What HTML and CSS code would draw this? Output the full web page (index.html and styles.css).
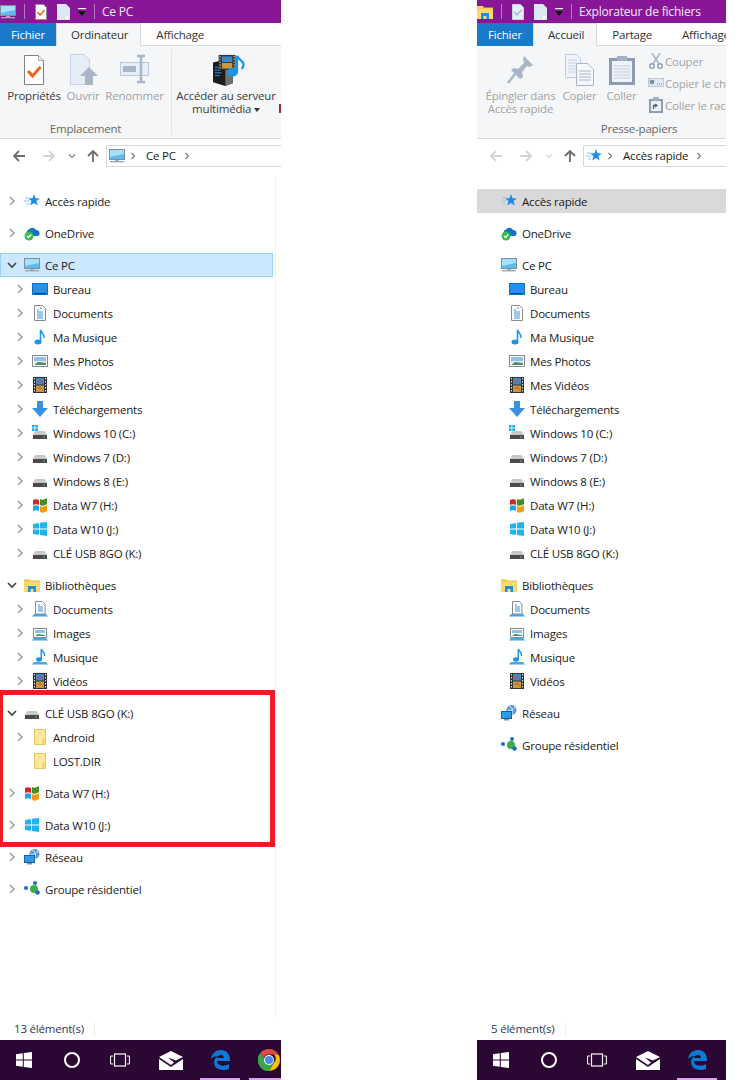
FILE: index.html
```html
<!DOCTYPE html>
<html lang="fr">

<head>
    <meta charset="UTF-8">
    <title>Explorateur de fichiers</title>
    <link rel="stylesheet" href="styles.css">
</head>

<body>
    <svg class="sprite" xmlns="http://www.w3.org/2000/svg">
        <symbol id="right" viewBox="0 0 12 12"><path d="M4 2l4 4-4 4" fill="none" stroke="#a6a6a6" stroke-width="1.6"/></symbol>
        <symbol id="down" viewBox="0 0 12 12"><path d="M2 4l4 4 4-4" fill="none" stroke="#404040" stroke-width="1.6"/></symbol>

        <symbol id="pc" viewBox="0 0 16 16">
            <rect x="0.5" y="1.5" width="15" height="10" fill="#5cbcf0" stroke="#7d8f9f"/>
            <path d="M1 2h14v4L1 9z" fill="#a4e0fa"/>
            <rect x="6" y="12" width="4" height="1" fill="#a9b1b8"/>
            <rect x="1" y="13" width="14" height="1.4" fill="#9aa6b0"/>
        </symbol>
        <symbol id="star" viewBox="0 0 16 16">
            <path d="M10 1l1.5 4.2 4.5.2-3.6 2.7 1.3 4.4L10 10l-3.800 2.500 1.300-4.400L4 5.400l4.500-.2z" fill="#1f8ae6"/>
            <path d="M1 5h4M0 8h5M2 11h3" stroke="#8cc6f2" stroke-width="1.200"/>
        </symbol>
        <symbol id="onedrive" viewBox="0 0 16 16">
            <path d="M4 10a3 3 0 0 1 1-5.500 4 4 0 0 1 7 .5 3 3 0 0 1 3.500 3 2.500 2.500 0 0 1-2 3H6z" fill="#1272c8"/>
            <circle cx="5" cy="11" r="4.500" fill="#3dbb4c"/>
            <path d="M3 11l1.500 1.500L7.200 9.500" fill="none" stroke="#fff" stroke-width="1.300"/>
        </symbol>
        <symbol id="desktop" viewBox="0 0 16 16">
            <rect x="0.5" y="2.500" width="15" height="11" fill="#1f93f2" stroke="#1670bd"/>
            <rect x="2" y="12" width="12" height="1" fill="#0b3f78"/>
        </symbol>
        <symbol id="doc" viewBox="0 0 16 16">
            <path d="M2.500 0.500h8l3 3v12h-11z" fill="#fff" stroke="#8b8b8b"/>
            <path d="M5 5h2M8 3h2M5 7h6M5 9h6M5 11h6M5 13h6" stroke="#3f8fd6"/>
        </symbol>
        <symbol id="note" viewBox="0 0 16 16">
            <ellipse cx="6" cy="13" rx="3.500" ry="2.500" fill="#1e94e8"/>
            <path d="M8.500 13V1c1 3 4 3.500 3.500 8" fill="none" stroke="#1e94e8" stroke-width="1.600"/>
        </symbol>
        <symbol id="photo" viewBox="0 0 16 16">
            <rect x="0.500" y="2.500" width="15" height="11" fill="#fff" stroke="#8a8a8a"/>
            <rect x="2" y="4" width="12" height="4" fill="#8fc2e8"/>
            <rect x="2" y="8" width="12" height="2" fill="#dfe8e4"/>
            <path d="M2 12l4-3 8 1v2z" fill="#4f8a72"/>
        </symbol>
        <symbol id="video" viewBox="0 0 16 16">
            <rect x="1" y="0" width="14" height="16" fill="#333"/>
            <rect x="4" y="1" width="8" height="6.500" fill="#3c8ac8"/>
            <rect x="4" y="8.500" width="8" height="6.500" fill="#c89a3c"/>
            <path d="M5 5l3-2 3 3M6 12l2-2 3 3" stroke="#d8452e" fill="none"/>
            <path d="M2.500 1v14M13.500 1v14" stroke="#ddd" stroke-dasharray="1.500 1.500"/>
        </symbol>
        <symbol id="download" viewBox="0 0 16 16"><path d="M5 0h6v7h5l-8 9-8-9h5z" fill="#3b8fe0"/></symbol>
        <symbol id="drive" viewBox="0 0 16 16">
            <path d="M3.500 6h9l2.500 4H1z" fill="#c8c8c8"/>
            <rect x="1" y="10" width="14" height="4" fill="#4a4a4a"/>
            <rect x="11" y="11.500" width="2" height="1" fill="#3fd060"/>
        </symbol>
        <symbol id="sysdrive" viewBox="0 0 16 16">
            <path d="M3.500 6h9l2.500 4H1z" fill="#c8c8c8"/>
            <rect x="1" y="10" width="14" height="4" fill="#4a4a4a"/>
            <rect x="11" y="11.500" width="2" height="1" fill="#3fd060"/>
            <path d="M0 0h2.500v2.500H0zM3.300 0H6v2.500H3.300zM0 3.300h2.500V6H0zM3.300 3.300H6V6H3.300z" fill="#1ea7ee"/>
        </symbol>
        <symbol id="flag7" viewBox="0 0 16 16">
            <path d="M1 3c2-1 4-1 6 0v5c-2-1-4-1-6 0z" fill="#d8281e"/>
            <path d="M8 2c2 1 4 1 7-1v6c-3 2-5 2-7 1z" fill="#3f8f22"/>
            <path d="M1 9c2-1 4-1 6 0v5c-2-1-4-1-6 0z" fill="#20a4e8"/>
            <path d="M8 9c2 1 4 1 7-1v6c-3 2-5 2-7 1z" fill="#f59a10"/>
        </symbol>
        <symbol id="flag10" viewBox="0 0 16 16">
            <path d="M1 3l6-1v5.500H1zM8 1.800L15 1v6.500H8zM1 8.500h6V14l-6-1zM8 8.500h7V15l-7-1z" fill="#1fb4ee"/>
        </symbol>
        <symbol id="library" viewBox="0 0 16 16">
            <path d="M0 2h6l1 2h9v11H0z" fill="#fcd970"/>
            <path d="M0 4h16" stroke="#e8bc4c"/>
            <path d="M4 15V9h8v6h-2.500v-3h-3v3z" fill="#1e8fe0"/>
        </symbol>
        <symbol id="libdoc" viewBox="0 0 16 16">
            <path d="M3.500 0.500h7l2.500 2.500v10h-9.500z" fill="#fff" stroke="#8b8b8b"/>
            <path d="M6 4h2M6 6h5M6 8h5M6 10h5" stroke="#3f8fd6"/>
            <path d="M2 13h12l2 2.500H0z" fill="#4ba6e8"/>
        </symbol>
        <symbol id="libimg" viewBox="0 0 16 16">
            <rect x="1.500" y="3.500" width="13" height="9" fill="#fff" stroke="#8a8a8a"/>
            <rect x="3" y="5" width="10" height="3" fill="#8fc2e8"/>
            <path d="M3 11l3-2 7 1v1z" fill="#4f8a72"/>
            <path d="M2 13h12l2 2.500H0z" fill="#4ba6e8"/>
        </symbol>
        <symbol id="libmusic" viewBox="0 0 16 16">
            <ellipse cx="7" cy="10.500" rx="3" ry="2.200" fill="#1e94e8"/>
            <path d="M9.300 10.500V0c1 2.500 3.700 3 3.200 7" fill="none" stroke="#1e94e8" stroke-width="1.500"/>
            <path d="M2 13h12l2 2.500H0z" fill="#4ba6e8"/>
        </symbol>
        <symbol id="folder" viewBox="0 0 16 16">
            <path d="M2.500 0.500h11v15h-11z" fill="#fde79b" stroke="#e8c55c"/>
            <path d="M11 11h2.500v4.500H11z" fill="#fbd96f" stroke="#e8c55c"/>
        </symbol>
        <symbol id="network" viewBox="0 0 16 16">
            <circle cx="10.500" cy="5" r="5" fill="#5b9bd5"/>
            <path d="M8 1c3 1 4 4 3 8M14 2c-2 3-4 4-7 3" stroke="#d8e8f6" fill="none"/>
            <rect x="0.500" y="6.500" width="10" height="7" fill="#2c9ce8" stroke="#1b5f9e"/>
            <rect x="3" y="14" width="5" height="1.500" fill="#7d8f9f"/>
        </symbol>
        <symbol id="homegroup" viewBox="0 0 16 16">
            <circle cx="2" cy="7" r="2" fill="#1d6fbf"/>
            <circle cx="10" cy="8" r="4" fill="#3fae49"/>
            <circle cx="11" cy="2" r="2" fill="#1d6fbf"/>
            <circle cx="13.500" cy="11.500" r="2.300" fill="#1d6fbf"/>
        </symbol>

        <symbol id="props" viewBox="0 0 32 32">
            <path d="M6.500 1.500h14l5 5v24h-19z" fill="#fff" stroke="#7f7f7f"/>
            <path d="M20.500 1.500v5h5" fill="#eee" stroke="#a8a8a8"/>
            <path d="M10 17l4.500 5 8-9" fill="none" stroke="#f0641e" stroke-width="3"/>
        </symbol>
        <symbol id="open" viewBox="0 0 32 32">
            <path d="M3.500 0.500h14l5 5v25h-19z" fill="#e6edf7" stroke="#c6d3e5"/>
            <path d="M22 13l9 9h-5v9h-8v-9h-5z" fill="#a9b6c6"/>
        </symbol>
        <symbol id="rename" viewBox="0 0 32 32">
            <rect x="1.500" y="8.500" width="28" height="13" fill="#e8eef7" stroke="#bcc9da"/>
            <rect x="4" y="12" width="13" height="6" fill="#a9b6c6"/>
            <path d="M18 2h8M18 28h8M22 2v26" stroke="#a9b6c6" stroke-width="2.500" fill="none"/>
        </symbol>
        <symbol id="media" viewBox="0 0 36 34">
            <path d="M1 9l12-3 9 5v20l-8 3-13-4z" fill="#1b1b1b"/>
            <path d="M14 7l8 4v20l-8 3z" fill="#707070"/>
            <path d="M3 14h7M3 17h6M3 20h7M3 23h5" stroke="#2f9be0"/>
            <rect x="7" y="1" width="18" height="16" fill="#333"/>
            <path d="M8.500 2v14M23.500 2v14" stroke="#ddd" stroke-dasharray="1.500 1.500"/>
            <rect x="10.500" y="2.500" width="11" height="6" fill="#3c8ac8"/>
            <rect x="10.500" y="9.500" width="11" height="6" fill="#c89a3c"/>
            <ellipse cx="21.500" cy="19.500" rx="6" ry="4.500" fill="#1e94e8"/>
            <path d="M26.500 19V2c1 4 7 5 7 9 0 2-.8 3.500-2 5" fill="none" stroke="#1e94e8" stroke-width="2.400"/>
        </symbol>
        <symbol id="pin" viewBox="0 0 32 32">
            <path d="M19 2l9 9-3 2-3-1-5 6 1 5-3 2-9-9 3-2 4 1 6-6-1-4z" fill="#a9b6c6"/>
            <path d="M10 20l-7 9" stroke="#a9b6c6" stroke-width="2.500"/>
        </symbol>
        <symbol id="copy" viewBox="0 0 32 32">
            <path d="M1.500 0.500h11l4 4v19h-15z" fill="#f0f4fa" stroke="#bcc9da"/>
            <path d="M4 6h9M4 9h9M4 12h9M4 15h9M4 18h9" stroke="#c7d2e0"/>
            <path d="M12.500 9.500h11l6 6v16h-17z" fill="#f4f7fb" stroke="#a9b6c6"/>
            <path d="M15 17h12M15 20h12M15 23h12M15 26h12" stroke="#a9b6c6"/>
        </symbol>
        <symbol id="paste" viewBox="0 0 32 32">
            <rect x="3" y="4" width="26" height="27" fill="#8d9cb2"/>
            <rect x="6" y="7" width="20" height="21" fill="#eef2f8"/>
            <path d="M8 12h16M8 15h16M8 18h16M8 21h16M8 24h16" stroke="#c3cfde"/>
            <rect x="11" y="2" width="10" height="5" fill="#a4b1c4"/>
        </symbol>
        <symbol id="cut" viewBox="0 0 16 16">
            <circle cx="4" cy="13" r="2.300" fill="none" stroke="#8d9cb2" stroke-width="1.400"/>
            <circle cx="12" cy="13" r="2.300" fill="none" stroke="#8d9cb2" stroke-width="1.400"/>
            <path d="M5 11L12 0M11 11L4 0" stroke="#a9b6c6" stroke-width="1.500"/>
        </symbol>
        <symbol id="copypath" viewBox="0 0 16 16">
            <rect x="0.500" y="3.500" width="15" height="8" fill="#e3e9f2" stroke="#bcc9da"/>
            <path d="M2 5l1 4 1-4 1 4 1-4M9 9h1M11 9h1M13 9h1" stroke="#6c7c92" fill="none"/>
        </symbol>
        <symbol id="pasteshort" viewBox="0 0 16 16">
            <rect x="1" y="2" width="14" height="14" fill="#8d9cb2"/>
            <rect x="3" y="4" width="10" height="10" fill="#eef2f8"/>
            <rect x="5" y="0" width="6" height="3.500" fill="#a4b1c4"/>
            <path d="M5.500 12V8.500h3M7 7l2 1.500L7 10" stroke="#4f6078" fill="none" stroke-width="1.300"/>
        </symbol>

        <symbol id="back" viewBox="0 0 14 14"><path d="M13 7H2M7 2L2 7l5 5" fill="none" stroke="currentColor" stroke-width="1.800"/></symbol>
        <symbol id="fwd" viewBox="0 0 14 14"><path d="M1 7h11M7 2l5 5-5 5" fill="none" stroke="currentColor" stroke-width="1.800"/></symbol>
        <symbol id="up" viewBox="0 0 14 14"><path d="M7 13V2M2 7l5-5 5 5" fill="none" stroke="currentColor" stroke-width="1.800"/></symbol>
        <symbol id="minidown" viewBox="0 0 8 8"><path d="M1 2.500l3 3 3-3" fill="none" stroke="currentColor" stroke-width="1.300"/></symbol>
        <symbol id="minirt" viewBox="0 0 8 8"><path d="M2.500 1l3 3-3 3" fill="none" stroke="#808080" stroke-width="1.300"/></symbol>

        <symbol id="qa-check" viewBox="0 0 12 16">
            <path d="M0.500 0.500h8l3 3v12h-11z" fill="#fff" stroke="#8c8c8c"/>
            <path d="M2.500 8l2.500 3 4.500-5" fill="none" stroke="#f0641e" stroke-width="1.600"/>
        </symbol>
        <symbol id="qa-check-off" viewBox="0 0 12 16">
            <path d="M0.500 0.500h8l3 3v12h-11z" fill="#e6edf7" stroke="#c6d3e5"/>
            <path d="M2.500 8l2.500 3 4.500-5" fill="none" stroke="#a9b6c6" stroke-width="1.400"/>
        </symbol>
        <symbol id="qa-blank" viewBox="0 0 13 16">
            <path d="M0 0h9l4 4v12H0z" fill="#dce6f4"/>
            <path d="M9 12h4l-4 4z" fill="#fff"/>
        </symbol>
        <symbol id="qa-menu" viewBox="0 0 8 8">
            <rect x="0" y="0" width="8" height="1.200" fill="#fff"/>
            <path d="M0 3h8L4 8z" fill="#111"/>
        </symbol>

        <symbol id="t-win" viewBox="0 0 16 16"><path d="M0 2.300l6.800-1v6.200H0zM7.800 1.100L16 0v7.500H7.800zM0 8.500h6.800v6.200l-6.800-1zM7.800 8.500H16V16l-8.200-1.100z" fill="#fff"/></symbol>
        <symbol id="t-view" viewBox="0 0 20 14">
            <rect x="4.500" y="1" width="11" height="12" fill="none" stroke="#fff" stroke-width="1.200"/>
            <path d="M3 3H.6v8H3M17 3h2.400v8H17" fill="none" stroke="#fff"/>
        </symbol>
        <symbol id="t-mail" viewBox="0 0 24 19">
            <path d="M0 6L12 0l12 6-7 3.500-8-3 6 5-3 2.500z" fill="#fff"/>
            <path d="M0 8l12 8 12-8v11H0z" fill="#fff"/>
        </symbol>
        <symbol id="t-edge" viewBox="0 0 20 20">
            <path d="M1 9C2 3 6 0 11 0c6 0 9 4 9 11H7c0 5 7 6 12 3v5c-6 2-15 1-15-7 0-3 2-5 4-6-3 0-5 1-7 3zm6-1h7c0-4-6-4-7 0z" fill="#0f78d4"/>
        </symbol>
        <symbol id="t-chrome" viewBox="0 0 22 22">
            <path d="M11 0a11 11 0 0 1 9.500 5.500H11a5.500 5.500 0 0 0-5.200 3.700L2.500 3.700A11 11 0 0 1 11 0z" fill="#dd4b3e"/>
            <path d="M20.500 5.500A11 11 0 0 1 11 22l4.700-8.200a5.500 5.500 0 0 0 .3-8.300z" fill="#f4c20d"/>
            <path d="M2.500 3.700l4.700 8.100a5.500 5.500 0 0 0 8.500 2L11 22A11 11 0 0 1 2.500 3.700z" fill="#3da44d"/>
            <circle cx="11" cy="11" r="5" fill="#fff"/>
            <circle cx="11" cy="11" r="4" fill="#4a8af4"/>
        </symbol>
    </svg>

    <div class="screen">
        <!-- fenetre gauche : Ce PC -->
        <div class="window win-left">
            <div class="titlebar">
                <svg class="qa-first"><use href="#pc"/></svg>
                <span class="qa-sep"></span>
                <svg class="qa-doc"><use href="#qa-check"/></svg>
                <svg class="qa-blank"><use href="#qa-blank"/></svg>
                <svg class="qa-menu"><use href="#qa-menu"/></svg>
                <span class="qa-sep qa-sep2"></span>
                <span class="title-text">Ce PC</span>
            </div>
            <div class="tabs">
                <span class="tab-file">Fichier</span>
                <span class="tab tab-active">Ordinateur</span>
                <span class="tab">Affichage</span>
            </div>
            <div class="ribbon">
                <div class="group group-place">
                    <div class="group-items">
                        <div class="big-btn btn-props"><svg><use href="#props"/></svg><span>Propriétés</span></div>
                        <div class="big-btn btn-open off"><svg><use href="#open"/></svg><span>Ouvrir</span></div>
                        <div class="big-btn btn-rename off"><svg><use href="#rename"/></svg><span>Renommer</span></div>
                    </div>
                    <div class="group-name">Emplacement</div>
                </div>
                <div class="group group-net">
                    <div class="group-items">
                        <div class="big-btn btn-media"><svg class="ico-media"><use href="#media"/></svg><span>Accéder au serveur<br>multimédia <i class="caret"></i></span></div>
                        <span class="next-btn"></span>
                    </div>
                </div>
            </div>
            <div class="addressbar">
                <svg class="nav-back"><use href="#back"/></svg>
                <svg class="nav-fwd off"><use href="#fwd"/></svg>
                <svg class="nav-recent"><use href="#minidown"/></svg>
                <svg class="nav-up"><use href="#up"/></svg>
                <div class="address">
                    <svg class="addr-icon"><use href="#pc"/></svg>
                    <svg class="addr-sep"><use href="#minirt"/></svg>
                    <span>Ce PC</span>
                    <svg class="addr-sep"><use href="#minirt"/></svg>
                </div>
            </div>
            <div class="tree tree-split">
                <div class="row top"><svg class="chev"><use href="#right"/></svg><svg class="ico"><use href="#star"/></svg><span>Accès rapide</span></div>
                <div class="row top"><svg class="chev"><use href="#right"/></svg><svg class="ico"><use href="#onedrive"/></svg><span>OneDrive</span></div>
                <div class="row top selected"><svg class="chev"><use href="#down"/></svg><svg class="ico"><use href="#pc"/></svg><span>Ce PC</span></div>
                <div class="row sub"><svg class="chev"><use href="#right"/></svg><svg class="ico"><use href="#desktop"/></svg><span>Bureau</span></div>
                <div class="row sub"><svg class="chev"><use href="#right"/></svg><svg class="ico"><use href="#doc"/></svg><span>Documents</span></div>
                <div class="row sub"><svg class="chev"><use href="#right"/></svg><svg class="ico"><use href="#note"/></svg><span>Ma Musique</span></div>
                <div class="row sub"><svg class="chev"><use href="#right"/></svg><svg class="ico"><use href="#photo"/></svg><span>Mes Photos</span></div>
                <div class="row sub"><svg class="chev"><use href="#right"/></svg><svg class="ico"><use href="#video"/></svg><span>Mes Vidéos</span></div>
                <div class="row sub"><svg class="chev"><use href="#right"/></svg><svg class="ico"><use href="#download"/></svg><span>Téléchargements</span></div>
                <div class="row sub"><svg class="chev"><use href="#right"/></svg><svg class="ico"><use href="#sysdrive"/></svg><span>Windows 10 (C:)</span></div>
                <div class="row sub"><svg class="chev"><use href="#right"/></svg><svg class="ico"><use href="#drive"/></svg><span>Windows 7 (D:)</span></div>
                <div class="row sub"><svg class="chev"><use href="#right"/></svg><svg class="ico"><use href="#drive"/></svg><span>Windows 8 (E:)</span></div>
                <div class="row sub"><svg class="chev"><use href="#right"/></svg><svg class="ico"><use href="#flag7"/></svg><span>Data W7 (H:)</span></div>
                <div class="row sub"><svg class="chev"><use href="#right"/></svg><svg class="ico"><use href="#flag10"/></svg><span>Data W10 (J:)</span></div>
                <div class="row sub"><svg class="chev"><use href="#right"/></svg><svg class="ico"><use href="#drive"/></svg><span>CLÉ USB 8GO (K:)</span></div>
                <div class="row top"><svg class="chev"><use href="#down"/></svg><svg class="ico"><use href="#library"/></svg><span>Bibliothèques</span></div>
                <div class="row sub"><svg class="chev"><use href="#right"/></svg><svg class="ico"><use href="#libdoc"/></svg><span>Documents</span></div>
                <div class="row sub"><svg class="chev"><use href="#right"/></svg><svg class="ico"><use href="#libimg"/></svg><span>Images</span></div>
                <div class="row sub"><svg class="chev"><use href="#right"/></svg><svg class="ico"><use href="#libmusic"/></svg><span>Musique</span></div>
                <div class="row sub"><svg class="chev"><use href="#right"/></svg><svg class="ico"><use href="#video"/></svg><span>Vidéos</span></div>
                <div class="marked">
                    <div class="row top"><svg class="chev"><use href="#down"/></svg><svg class="ico"><use href="#drive"/></svg><span>CLÉ USB 8GO (K:)</span></div>
                    <div class="row sub"><svg class="chev"><use href="#right"/></svg><svg class="ico"><use href="#folder"/></svg><span>Android</span></div>
                    <div class="row sub"><span class="chev"></span><svg class="ico"><use href="#folder"/></svg><span>LOST.DIR</span></div>
                    <div class="row top"><svg class="chev"><use href="#right"/></svg><svg class="ico"><use href="#flag7"/></svg><span>Data W7 (H:)</span></div>
                    <div class="row top"><svg class="chev"><use href="#right"/></svg><svg class="ico"><use href="#flag10"/></svg><span>Data W10 (J:)</span></div>
                </div>
                <div class="row top"><svg class="chev"><use href="#right"/></svg><svg class="ico"><use href="#network"/></svg><span>Réseau</span></div>
                <div class="row top"><svg class="chev"><use href="#right"/></svg><svg class="ico"><use href="#homegroup"/></svg><span>Groupe résidentiel</span></div>
            </div>
            <div class="statusbar"><span class="status-text status-13">13 élément(s)</span></div>
            <div class="taskbar">
                <div class="task"><svg class="t-win"><use href="#t-win"/></svg></div>
                <div class="task"><span class="t-circle"></span></div>
                <div class="task"><svg class="t-view"><use href="#t-view"/></svg></div>
                <div class="task task-mail"><svg class="t-mail"><use href="#t-mail"/></svg></div>
                <div class="task active"><svg class="t-edge"><use href="#t-edge"/></svg></div>
                <div class="task active task-last"><svg class="t-chrome"><use href="#t-chrome"/></svg></div>
            </div>
        </div>

        <!-- fenetre droite : Acces rapide -->
        <div class="window win-right">
            <div class="titlebar">
                <svg class="qa-first"><use href="#library"/></svg>
                <span class="qa-sep"></span>
                <svg class="qa-doc"><use href="#qa-check-off"/></svg>
                <svg class="qa-blank"><use href="#qa-blank"/></svg>
                <svg class="qa-menu"><use href="#qa-menu"/></svg>
                <span class="qa-sep qa-sep2"></span>
                <span class="title-text">Explorateur de fichiers</span>
            </div>
            <div class="tabs">
                <span class="tab-file">Fichier</span>
                <span class="tab tab-active">Accueil</span>
                <span class="tab">Partage</span>
                <span class="tab">Affichage</span>
            </div>
            <div class="ribbon">
                <div class="group group-clip">
                    <div class="group-items">
                        <div class="big-btn btn-pin off"><svg><use href="#pin"/></svg><span>Épingler dans<br>Accès rapide</span></div>
                        <div class="big-btn btn-copy off"><svg><use href="#copy"/></svg><span>Copier</span></div>
                        <div class="big-btn btn-paste off"><svg><use href="#paste"/></svg><span>Coller</span></div>
                        <div class="small-btns off">
                            <div class="small-btn"><svg><use href="#cut"/></svg><span>Couper</span></div>
                            <div class="small-btn"><svg><use href="#copypath"/></svg><span>Copier le chemin d'accès</span></div>
                            <div class="small-btn"><svg><use href="#pasteshort"/></svg><span>Coller le raccourci</span></div>
                        </div>
                    </div>
                    <div class="group-name name-clip">Presse-papiers</div>
                </div>
            </div>
            <div class="addressbar">
                <svg class="nav-back off"><use href="#back"/></svg>
                <svg class="nav-fwd off"><use href="#fwd"/></svg>
                <svg class="nav-recent off"><use href="#minidown"/></svg>
                <svg class="nav-up"><use href="#up"/></svg>
                <div class="address">
                    <svg class="addr-icon"><use href="#star"/></svg>
                    <svg class="addr-sep"><use href="#minirt"/></svg>
                    <span>Accès rapide</span>
                    <svg class="addr-sep"><use href="#minirt"/></svg>
                </div>
            </div>
            <div class="tree">
                <div class="row top current"><span class="chev"></span><svg class="ico"><use href="#star"/></svg><span>Accès rapide</span></div>
                <div class="row top"><span class="chev"></span><svg class="ico"><use href="#onedrive"/></svg><span>OneDrive</span></div>
                <div class="row top"><span class="chev"></span><svg class="ico"><use href="#pc"/></svg><span>Ce PC</span></div>
                <div class="row sub"><span class="chev"></span><svg class="ico"><use href="#desktop"/></svg><span>Bureau</span></div>
                <div class="row sub"><span class="chev"></span><svg class="ico"><use href="#doc"/></svg><span>Documents</span></div>
                <div class="row sub"><span class="chev"></span><svg class="ico"><use href="#note"/></svg><span>Ma Musique</span></div>
                <div class="row sub"><span class="chev"></span><svg class="ico"><use href="#photo"/></svg><span>Mes Photos</span></div>
                <div class="row sub"><span class="chev"></span><svg class="ico"><use href="#video"/></svg><span>Mes Vidéos</span></div>
                <div class="row sub"><span class="chev"></span><svg class="ico"><use href="#download"/></svg><span>Téléchargements</span></div>
                <div class="row sub"><span class="chev"></span><svg class="ico"><use href="#sysdrive"/></svg><span>Windows 10 (C:)</span></div>
                <div class="row sub"><span class="chev"></span><svg class="ico"><use href="#drive"/></svg><span>Windows 7 (D:)</span></div>
                <div class="row sub"><span class="chev"></span><svg class="ico"><use href="#drive"/></svg><span>Windows 8 (E:)</span></div>
                <div class="row sub"><span class="chev"></span><svg class="ico"><use href="#flag7"/></svg><span>Data W7 (H:)</span></div>
                <div class="row sub"><span class="chev"></span><svg class="ico"><use href="#flag10"/></svg><span>Data W10 (J:)</span></div>
                <div class="row sub"><span class="chev"></span><svg class="ico"><use href="#drive"/></svg><span>CLÉ USB 8GO (K:)</span></div>
                <div class="row top"><span class="chev"></span><svg class="ico"><use href="#library"/></svg><span>Bibliothèques</span></div>
                <div class="row sub"><span class="chev"></span><svg class="ico"><use href="#libdoc"/></svg><span>Documents</span></div>
                <div class="row sub"><span class="chev"></span><svg class="ico"><use href="#libimg"/></svg><span>Images</span></div>
                <div class="row sub"><span class="chev"></span><svg class="ico"><use href="#libmusic"/></svg><span>Musique</span></div>
                <div class="row sub"><span class="chev"></span><svg class="ico"><use href="#video"/></svg><span>Vidéos</span></div>
                <div class="row top"><span class="chev"></span><svg class="ico"><use href="#network"/></svg><span>Réseau</span></div>
                <div class="row top"><span class="chev"></span><svg class="ico"><use href="#homegroup"/></svg><span>Groupe résidentiel</span></div>
            </div>
            <div class="statusbar"><span class="status-text status-5">5 élément(s)</span></div>
            <div class="taskbar">
                <div class="task"><svg class="t-win"><use href="#t-win"/></svg></div>
                <div class="task"><span class="t-circle"></span></div>
                <div class="task"><svg class="t-view"><use href="#t-view"/></svg></div>
                <div class="task task-mail"><svg class="t-mail"><use href="#t-mail"/></svg></div>
                <div class="task active"><svg class="t-edge"><use href="#t-edge"/></svg></div>
            </div>
        </div>
    </div>
</body>

</html>
```

FILE: styles.css
```css
body {
    margin: 0;
    background-color: #fff;
    color: #1a1a1a;
    font-family: "Open Sans", "Noto Sans", Arial, sans-serif;
    font-size: 11.5px;
    letter-spacing: -0.2px;
}

svg {
    display: block;
    flex: none;
}

.sprite {
    display: none;
}

.screen {
    display: flex;
    height: 1080px;
    overflow: hidden;
}

.window {
    display: flex;
    flex-direction: column;
    height: 1080px;
    overflow: hidden;
    flex: none;
}

.win-left {
    width: 281px;
}

.win-right {
    width: 249px;
    margin-left: 196px;
}

/* barre de titre */
.titlebar {
    display: flex;
    align-items: center;
    height: 23px;
    flex: none;
    background-color: #881798;
    color: #f4e8f6;
}

.qa-first {
    width: 16px;
    height: 16px;
}

.qa-sep {
    width: 1px;
    height: 15px;
    margin-left: 8px;
    background-color: #b27fbe;
}

.qa-sep2 {
    margin-left: 8px;
}

.qa-doc {
    width: 12px;
    height: 16px;
    margin-left: 10px;
}

.qa-blank {
    width: 13px;
    height: 16px;
    margin-left: 10px;
}

.qa-menu {
    width: 8px;
    height: 8px;
    margin-left: 8px;
}

.title-text {
    margin-left: 7px;
    font-size: 12px;
    white-space: nowrap;
}

/* onglets */
.tabs {
    display: flex;
    height: 23px;
    flex: none;
    line-height: 23px;
    color: #333;
    white-space: nowrap;
    box-sizing: border-box;
    border-bottom: 1px solid #dadbdc;
}

.tab-file {
    width: 56px;
    height: 23px;
    text-align: center;
    flex: none;
    background-color: #1979ca;
    color: #fff;
}

.tab {
    padding: 0 15px;
    flex: none;
}

.tab-active {
    height: 23px;
    box-sizing: border-box;
    padding: 0 12px 0 14px;
    border: 1px solid #dadbdc;
    border-bottom: none;
    background-color: #f5f6f7;
    line-height: 21px;
}

/* ruban */
.ribbon {
    display: flex;
    height: 93px;
    flex: none;
    box-sizing: border-box;
    background-color: #f5f6f7;
    border-bottom: 1px solid #dadbdc;
    color: #3c3c3c;
}

.group {
    display: flex;
    flex-direction: column;
    flex: none;
    margin: 3px 0;
    box-sizing: border-box;
}

.group-place {
    width: 172px;
    border-right: 1px solid #e1e3e6;
}

.group-net {
    width: 109px;
}

.group-clip {
    width: 324px;
}

.group-items {
    display: flex;
    flex: 1;
    padding-left: 8px;
    padding-top: 5px;
}

.group-name {
    height: 13px;
    line-height: 13px;
    text-align: center;
    color: #666;
}

.big-btn {
    display: flex;
    flex-direction: column;
    align-items: center;
    line-height: 13px;
    white-space: nowrap;
    text-align: center;
}

.big-btn svg {
    width: 32px;
    height: 32px;
    margin-bottom: 3px;
}

.big-btn .ico-media {
    width: 34px;
    margin-left: 5px;
}

.btn-props {
    width: 52px;
}

.btn-open {
    width: 32px;
    margin-left: 7px;
}

.btn-rename {
    width: 55px;
    margin-left: 8px;
}

.btn-media {
    width: 96px;
    margin-left: -2px;
}

.btn-pin {
    width: 71px;
}

.btn-copy {
    width: 35px;
    margin-left: 6px;
}

.btn-paste {
    width: 29px;
    margin-left: 10px;
}

.off {
    color: #a3a3a3;
}

.caret {
    display: inline-block;
    vertical-align: middle;
    border-left: 3px solid transparent;
    border-right: 3px solid transparent;
    border-top: 4px solid #333;
}

.next-btn {
    width: 3px;
    height: 9px;
    margin: 50px 0 0 5px;
    background-color: #8c2f39;
}

.small-btns {
    display: flex;
    flex-direction: column;
    gap: 6px;
    margin-left: 12px;
    margin-top: -1px;
}

.small-btn {
    display: flex;
    align-items: center;
    gap: 1px;
    height: 16px;
    white-space: nowrap;
}

.small-btn svg {
    width: 16px;
    height: 16px;
}

/* barre d'adresse */
.addressbar {
    display: flex;
    align-items: center;
    height: 37px;
    flex: none;
    box-sizing: border-box;
    padding-bottom: 9px;
    padding-top: 6px;
    color: #6d6d6d;
}

.addressbar svg.off {
    color: #d4d4d4;
}

.nav-back,
.nav-fwd,
.nav-up {
    width: 14px;
    height: 14px;
    margin-top: -1px;
}

.nav-back {
    margin-left: 12px;
}

.nav-fwd {
    margin-left: 16px;
}

.nav-recent {
    width: 8px;
    height: 8px;
    margin-left: 12px;
    color: #8c8c8c;
}

.nav-up {
    margin-left: 10px;
}

.address {
    display: flex;
    align-items: center;
    flex: none;
    width: 200px;
    height: 22px;
    margin-left: 6px;
    box-sizing: border-box;
    border: 1px solid #d9d9d9;
    padding-left: 2px;
    padding-bottom: 1px;
    color: #1a1a1a;
    white-space: nowrap;
}

.addr-icon {
    width: 16px;
    height: 16px;
}

.addr-sep {
    width: 8px;
    height: 8px;
    margin: 0 9px 0 4px;
}

.address span + .addr-sep {
    margin-left: 7px;
}

/* arborescence */
.tree {
    flex: 1;
    padding-top: 5px;
}

.tree-split {
    width: 276px;
    box-sizing: border-box;
    border-right: 1px solid #f0f0f0;
}

.row {
    display: flex;
    align-items: center;
    height: 24px;
    box-sizing: border-box;
    white-space: nowrap;
}

.top {
    margin-top: 8px;
    padding-left: 6px;
}

.sub {
    padding-left: 14px;
}

.top.selected {
    margin-right: 2px;
    background-color: #cce8ff;
    border: 1px solid #99d1ff;
    padding-left: 5px;
}

.current {
    background-color: #d9d9d9;
}

.chev {
    display: block;
    width: 12px;
    height: 12px;
    margin-right: 6px;
    flex: none;
}

.ico {
    width: 16px;
    height: 16px;
    margin-right: 5px;
}

.marked {
    position: relative;
}

.marked::after {
    content: "";
    position: absolute;
    top: -11px;
    left: 0;
    width: 275px;
    height: 157px;
    box-sizing: border-box;
    border: 5px solid #ed1c24;
    border-left-width: 3px;
    pointer-events: none;
}

/* barre d'etat */
.statusbar {
    height: 22px;
    flex: none;
    display: flex;
    align-items: center;
    color: #1f3a5c;
}

.status-text {
    padding-left: 14px;
    padding-right: 10px;
    height: 14px;
    line-height: 14px;
    border-right: 1px solid #efefef;
}

/* barre des taches */
.taskbar {
    display: flex;
    height: 40px;
    flex: none;
    background-color: #2b0733;
}

.task {
    display: flex;
    justify-content: center;
    align-items: center;
    flex: none;
    width: 40px;
    margin: 0 4px;
    box-sizing: border-box;
    padding-top: 2px;
    border-bottom: 2px solid transparent;
}

.task-mail {
    margin-left: 7px;
    margin-right: 5px;
}

.task-last {
    margin-left: 5px;
}

.task.active {
    border-bottom-color: #d9a3ea;
}

.t-win {
    width: 16px;
    height: 16px;
}

.t-circle {
    width: 12px;
    height: 12px;
    border: 2px solid #fff;
    border-radius: 50%;
}

.t-view {
    width: 20px;
    height: 14px;
}

.t-mail {
    width: 24px;
    height: 19px;
}

.t-edge {
    width: 20px;
    height: 20px;
}

.t-chrome {
    width: 22px;
    height: 22px;
}
```
